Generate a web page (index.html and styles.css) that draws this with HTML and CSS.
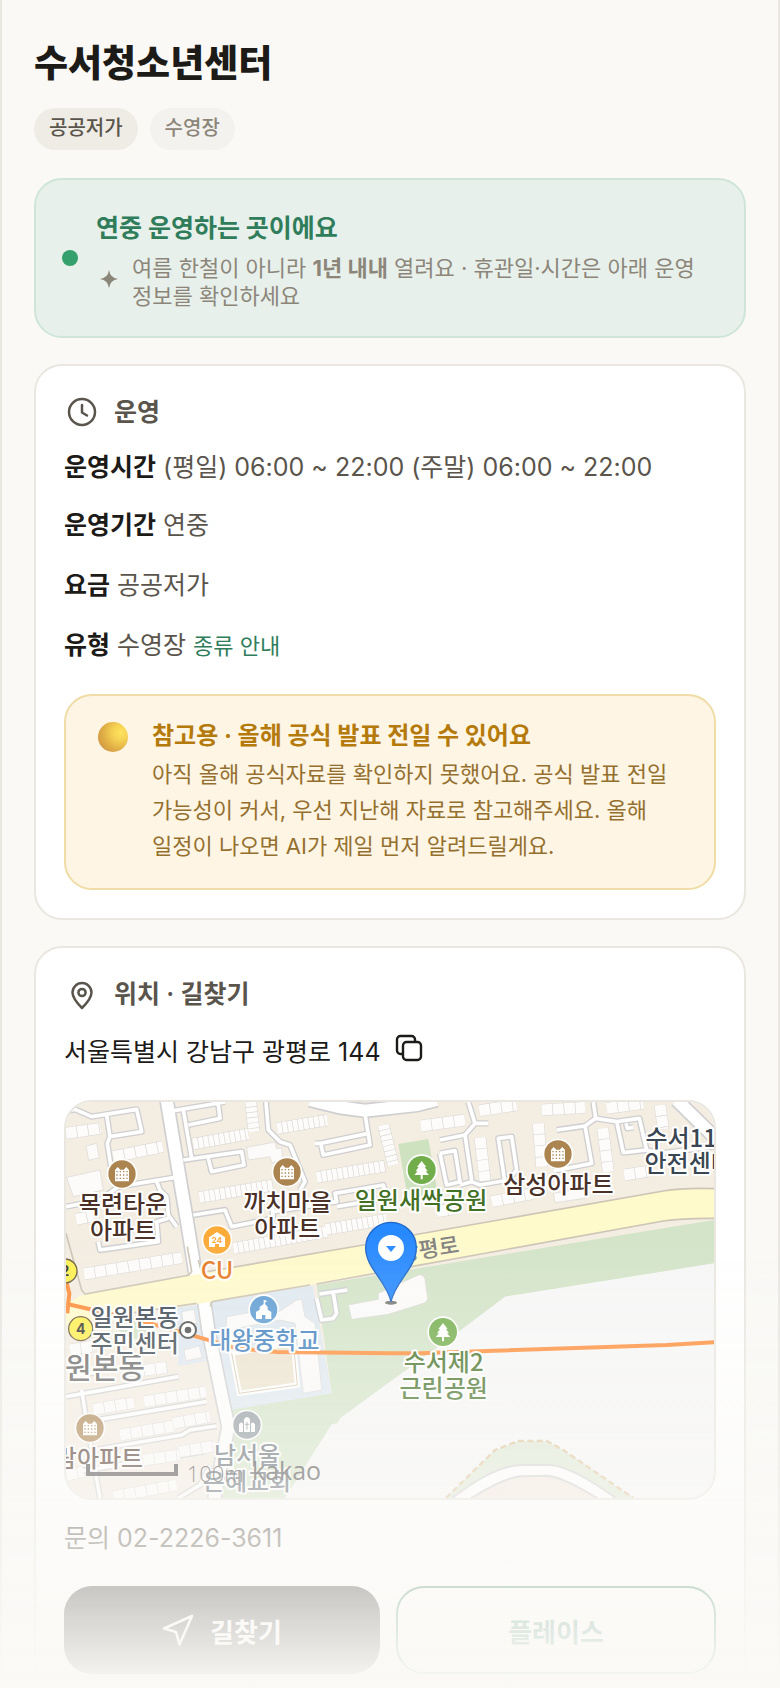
FILE: index.html
```html
<!DOCTYPE html>
<html lang="ko">
<head>
    <meta charset="UTF-8">
    <meta name="viewport" content="width=device-width, initial-scale=1.0">
    <title>수서청소년센터</title>
    <link rel="stylesheet" href="styles.css">
</head>
<body>
    <main class="app">
        <header class="place-header">
            <h1>수서청소년센터</h1>
            <div class="chips">
                <span class="chip chip-strong">공공저가</span>
                <span class="chip">수영장</span>
            </div>
        </header>

        <section class="status">
            <span class="status-dot"></span>
            <div class="status-body">
                <h2>연중 운영하는 곳이에요</h2>
                <div class="status-note">
                    <svg class="spark" viewBox="0 0 16 16"><path d="M8 0 Q9 7 16 8 Q9 9 8 16 Q7 9 0 8 Q7 7 8 0Z"/></svg>
                    <p>여름 한철이 아니라 <b>1년 내내</b> 열려요 · 휴관일·시간은 아래 운영 정보를 확인하세요</p>
                </div>
            </div>
        </section>

        <section class="card">
            <h2 class="card-title">
                <svg class="icon" viewBox="0 0 36 36"><circle cx="18" cy="18" r="13"/><path d="M18 11v7.500l5 3"/></svg>
                운영
            </h2>
            <ul class="info">
                <li><b>운영시간</b> (평일) 06:00 ~ 22:00 (주말) 06:00 ~ 22:00</li>
                <li><b>운영기간</b> 연중</li>
                <li><b>요금</b> 공공저가</li>
                <li><b>유형</b> 수영장 <a href="#guide">종류 안내</a></li>
            </ul>
            <div class="notice">
                <span class="orb"></span>
                <div>
                    <h3>참고용 · 올해 공식 발표 전일 수 있어요</h3>
                    <p>아직 올해 공식자료를 확인하지 못했어요. 공식 발표 전일 가능성이 커서, 우선 지난해 자료로 참고해주세요. 올해 일정이 나오면 AI가 제일 먼저 알려드릴게요.</p>
                </div>
            </div>
        </section>

        <section class="card">
            <h2 class="card-title">
                <svg class="icon" viewBox="0 0 36 36"><path d="M18 32C13 27 8.500 22 8.500 16.500a9.500 9.500 0 0 1 19 0C27.500 22 23 27 18 32Z"/><circle cx="18" cy="16.500" r="3.600"/></svg>
                위치 · 길찾기
            </h2>
            <div class="address">
                <span>서울특별시 강남구 광평로 144</span>
                <button class="copy" type="button" aria-label="주소 복사">
                    <svg viewBox="0 0 28 28"><path d="M7 20H5.500A3.500 3.500 0 0 1 2 16.500V5.500A3.500 3.500 0 0 1 5.500 2h11A3.500 3.500 0 0 1 20 5.500V7"/><rect x="8" y="8" width="18" height="18" rx="3.500"/></svg>
                </button>
            </div>

            <div class="map">
                <svg viewBox="48 36 1944 1188" preserveAspectRatio="xMidYMid slice">
                    <defs>
                        <g id="lanes">
                            <path d="M48 65L75 58L125 80L260 58L275 125L180 140L170 75M180 140L172 160L182 225L205 290L375 262M320 275L330 300L350 320L355 375L380 410M355 385L320 395L325 455L150 480L145 455M205 290L150 330L48 350"/>
                            <path d="M372 62L525 36M400 60L425 205M505 45L510 85L415 105M400 210L575 185L582 225L485 245L475 205M425 205L400 60"/>
                            <path d="M648 36L655 120L690 155L720 165L755 250L765 275L750 300M430 375L525 360L545 410L670 385L665 345M670 365L860 335L855 310L1000 285L1010 325L860 350"/>
                            <path d="M945 72L960 165L820 195L812 160L795 160M812 160L955 130"/>
                            <path d="M1255 36L1275 100L1315 100M1275 100L1245 135L1170 150M1245 135L1265 270M1170 190L1215 182L1230 275L1190 285L1170 190M1230 285L1265 275L1290 285L1375 270L1400 240L1385 140L1345 145L1365 280"/>
                            <path d="M1630 36L1637 85L1605 108L1520 120M1605 108L1625 220L1510 243M1637 85L1700 95L1768 85L1790 180L1720 188L1700 95M1728 100L1732 115L1750 112M1790 180L1830 190L1992 170"/>
                            <path d="M48 920L385 860M110 995L470 935M95 900L110 995L150 1224M130 1080L395 1035L420 1020L500 1008M48 1150L460 1085M385 1224L450 1185L480 1130M60 860L150 845"/>
                            <path d="M808 612L892 600M850 610L860 670L850 685L815 690L800 625"/>
                        </g>
                        <g id="mainst">
                            <path d="M350 30L395 300L412 400L440 575"/>
                            <path d="M462 630L475 720L520 940L535 1010L490 1240"/>
                            <path d="M780 30L870 52L945 62L1100 45L1160 30"/>
                            <path d="M1880 30L1992 140"/>
                        </g>
                        <g id="rows">
                            <path d="M430 162L595 132M448 322L670 285M682 115L832 90M800 262L1005 228M828 418L1010 388M1000 105L1030 225M602 36L612 125M550 475L830 425"/>
                        </g>
                        <g id="blocks">
                            <path d="M48 130L152 115M190 200L338 170M102 552L395 503M1288 62L1400 45M1475 60L1605 52M1670 55L1780 40M1112 108L1245 90M1465 100L1475 230M1290 143L1305 272M1658 115L1675 245M1830 45L1840 118M1722 255L1800 243M1325 335L1450 310M1160 365L1210 357M78 388L130 378"/>
                            <path d="M282 935L468 905M130 958L252 938M210 1035L370 1008M370 1000L480 980M280 1110L388 1095M388 1085L495 1068M190 1220L380 1185M50 1155L100 1145M60 780L130 768M250 845L352 832"/>
                        </g>
                        <g id="apt">
                            <circle class="ring" r="46"/>
                            <circle r="41" fill="#ab8450"/>
                            <path d="M-21 22V-12L-13 -21L-5 -13H5L13 -21L21 -12V22Z" fill="#fff"/>
                            <path d="M-17 -7H17M-17 3H17M-17 13H17" stroke="#ab8450" stroke-width="4" stroke-dasharray="4 6"/>
                        </g>
                        <g id="tree">
                            <circle class="ring" r="47"/>
                            <circle r="42" fill="#72ad4b"/>
                            <path d="M0 -27L14 -9H9L18 4H12L22 15H3V28H-3V15H-22L-12 4H-18L-9 -9H-14Z" fill="#fff"/>
                        </g>
                    </defs>

                    <rect x="48" y="36" width="1944" height="1188" fill="#f4ede2"/>
                    <path d="M800 585L1992 390V522L1365 620L705 1224H515L545 955L845 910Z" fill="#d3e4c8"/>
                    <path d="M1992 520L1365 620L1230 722L1020 875L870 985L862 1000L845 1003L705 1224H1992Z" fill="#f7f7f7"/>
                    <path d="M1045 162L1135 147L1165 320L1075 335Z" fill="#cfe2c0"/>
                    <path d="M482 637L788 587L845 910L540 960Z" fill="#dfe9f1"/>
                    <path d="M380 655L442 645L472 812L385 828Z" fill="#dfe9f1"/>
                    <path d="M205 705L290 690L300 740L215 752Z" fill="#d3e4c8"/>

                    <use href="#mainst" class="street-edge"/>
                    <use href="#lanes" class="lane-edge"/>
                    <use href="#mainst" class="street"/>
                    <use href="#lanes" class="lane"/>
                    <use href="#rows" class="row-edge"/>
                    <use href="#rows" class="row-fill"/>
                    <use href="#blocks" class="block-edge"/>
                    <use href="#blocks" class="block-fill"/>

                    <g class="building">
                        <path d="M50 262L150 240L160 300L70 320Z"/>
                        <path d="M108 168L140 160L148 203L116 211Z"/>
                        <path d="M590 172L675 156L680 176L695 173L700 212L665 218L660 200L595 210Z"/>
                        <path d="M530 680L640 660L650 690L740 630L755 628L765 680L795 700L815 900L760 910L735 700L690 690L560 715L550 780L525 785Z"/>
                        <path d="M395 665L432 658L440 700L400 705ZM402 780L448 768L456 803L408 812Z"/>
                        <path d="M895 645L985 628L985 610L1105 555Q1120 552 1125 568L1133 625Q1133 635 1120 640L1015 673L905 688Z"/>
                        <path d="M1510 310L1600 295L1605 325L1515 338Z"/>
                    </g>
                    <path d="M545 790L730 758L742 885L568 910Z" fill="#ede4cf" stroke="#fff" stroke-width="16"/>
                    <path d="M545 790L568 910L742 885L730 758" fill="none" stroke="#d8c8b0" stroke-width="3"/>

                    <!-- 광평로 -->
                    <path d="M48 640L105 612L425 556L560 530L940 465L1090 435L1840 303Q1900 293 1992 296V385Q1900 384 1840 393L1100 527L780 585L480 636L250 668L48 705Z" fill="#fffacb"/>
                    <path d="M48 430L95 600L105 612L415 556L425 545L412 470M445 510L455 548L940 465L1090 435L1840 303Q1900 293 1992 296" class="kerb"/>
                    <path d="M1992 385Q1900 384 1840 393L1100 527L800 582M780 585L490 634Q480 638 482 650M440 640L250 668" class="kerb"/>

                    <path d="M1188 1224L1335 1080L1405 1053H1490L1540 1080L1750 1224Z" fill="#dfe9d4"/>
                    <path d="M1188 1224L1335 1080L1405 1053H1490L1540 1080L1750 1224" fill="none" stroke="#dfc49b" stroke-width="7" stroke-dasharray="18 10"/>
                    <path d="M1200 1230Q1330 1125 1420 1125H1500Q1570 1130 1705 1230Z" fill="#fff" stroke="#d3d3d3" stroke-width="6"/>
                    <path d="M1255 1230Q1370 1157 1420 1159L1490 1157Q1540 1160 1650 1230Z" fill="#f3eadf" stroke="#d3d3d3" stroke-width="6"/>

                    <path d="M50 580L58 610L52 670M48 641L130 660L300 700L440 740L560 775L680 786L1020 790L1110 790L1850 765L1992 757" fill="none" stroke="#ff8b35" stroke-width="12"/>

                    <text class="road-name" transform="translate(1050 515) rotate(-9)">광평로</text>
                    <text class="district" x="45" y="868">원본동</text>

                    <circle cx="45" cy="543" r="36" class="exit"/>
                    <text x="45" y="558" class="exit-no">2</text>
                    <circle cx="92" cy="716" r="36" class="exit"/>
                    <text x="92" y="731" class="exit-no">4</text>
                    <circle cx="414" cy="720" r="24" fill="#fff" stroke="#4b4b4b" stroke-width="6"/>
                    <circle cx="414" cy="720" r="10" fill="#4b4b4b"/>

                    <use href="#apt" x="216" y="252"/>
                    <use href="#apt" x="711" y="246"/>
                    <use href="#apt" x="1524" y="192"/>
                    <use href="#apt" x="120" y="1014"/>
                    <use href="#tree" x="1115" y="240"/>
                    <use href="#tree" x="1179" y="726"/>
                    <g transform="translate(501 450)">
                        <circle class="ring" r="46"/>
                        <circle r="41" fill="#fbab38"/>
                        <path d="M-24 21V-8L0 -24L24 -8V21H6V12H-6V21Z" fill="#fff"/>
                        <text y="9" class="store-no">24</text>
                    </g>
                    <g transform="translate(641 659)">
                        <circle class="ring" r="46"/>
                        <circle r="41" fill="#5e9cd3"/>
                        <path d="M-23 28V7L-12 0V-8L0 -17V-29H4L10 -25L4 -21V-17L12 -8V0L23 7V28H5V16H-5V28Z" fill="#fff"/>
                    </g>
                    <g transform="translate(591 1005)">
                        <circle class="ring" r="46"/>
                        <circle r="41" fill="#8d979f"/>
                        <path d="M-9 21V-17Q0 -31 9 -17V21ZM-24 21V-2Q-18 -12 -12 -4V21ZM24 21V-2Q18 -12 12 -4V21Z" fill="#fff"/>
                        <path d="M0 -9V14M-6 -2H6" stroke="#8d979f" stroke-width="3"/>
                    </g>

                    <g class="label brown">
                        <text x="219" y="370">목련타운</text>
                        <text x="219" y="447">아파트</text>
                        <text x="712" y="364">까치마을</text>
                        <text x="712" y="441">아파트</text>
                        <text x="1525" y="310">삼성아파트</text>
                        <text x="147" y="1130">람아파트</text>
                    </g>
                    <g class="label green">
                        <text x="1113" y="357">일원새싹공원</text>
                        <text x="1181" y="843">수서제2</text>
                        <text x="1181" y="921">근린공원</text>
                    </g>
                    <g class="label slate">
                        <text x="254" y="708">일원본동</text>
                        <text x="254" y="786">주민센터</text>
                        <text x="1914" y="170">수서119</text>
                        <text x="1916" y="247">안전센터</text>
                    </g>
                    <g class="label gray">
                        <text x="591" y="1121">남서울</text>
                        <text x="591" y="1200">은혜교회</text>
                    </g>
                    <text class="label orange" x="501" y="568">CU</text>
                    <text class="label blue" x="643" y="776">대왕중학교</text>

                    <g class="scale">
                        <path d="M114 1122V1152H378V1122" fill="none" stroke="#444" stroke-width="12"/>
                        <text x="410" y="1176">100m</text>
                        <text x="606" y="1170" class="kakao">kakao</text>
                    </g>

                    <ellipse cx="1023" cy="638" rx="18" ry="6" fill="#777"/>
                    <path d="M1023 635C1008 570 947 535 947 473a76 76 0 0 1 152 0C1099 535 1038 570 1023 635Z" fill="#2789ff" stroke="#1d66c9" stroke-width="4"/>
                    <circle cx="1023" cy="474" r="39" fill="#fff"/>
                    <path d="M1008 468H1038L1023 486Z" fill="#2789ff"/>
                </svg>
            </div>

            <p class="contact">문의 02-2226-3611</p>
            <div class="actions">
                <button class="btn btn-dark" type="button">
                    <svg class="send" viewBox="0 0 32 32"><path d="M30 2L2 14.500L14 18L17.500 30.500Z"/></svg>
                    길찾기
                </button>
                <button class="btn btn-line" type="button">플레이스</button>
            </div>
        </section>
        <div class="fade"></div>
    </main>
</body>
</html>
```
FILE: styles.css
```css
* {
    box-sizing: border-box;
}

body {
    margin: 0;
    background-color: #faf9f6;
    color: #5a554c;
    font-family: Inter, "Noto Sans CJK KR", sans-serif;
    font-size: 25px;
    word-break: keep-all;
}

h1, h2, h3, p, ul {
    margin: 0;
    padding: 0;
}

.app {
    height: 100vh;
    overflow-y: auto;
    scrollbar-width: none;
    padding: 36px 32px;
    border: solid #e9e7e0;
    border-width: 0 2px;
}

h1 {
    color: #1c1b18;
    font-size: 37px;
    font-weight: 800;
    line-height: 56px;
}

.chips {
    display: flex;
    gap: 12px;
    margin: 16px 0 28px;
}

.chip {
    padding: 0 15px;
    border-radius: 21px;
    background-color: #f3f2ee;
    color: #8c867a;
    font-size: 20px;
    font-weight: 500;
    line-height: 40px;
    height: 42px;
}

.chip-strong {
    background-color: #efece5;
    color: #5a554c;
}

.status {
    display: flex;
    align-items: center;
    gap: 18px;
    padding: 26px 24px;
    border: 2px solid #cfe5d9;
    border-radius: 28px;
    background-color: #e8f0eb;
}

.status-dot {
    flex: none;
    width: 16px;
    height: 16px;
    margin-left: 2px;
    border-radius: 50%;
    background-color: #35a06b;
}

.status h2 {
    color: #2f7d5b;
    font-size: 25px;
    font-weight: 700;
    line-height: 44px;
}

.status-note {
    display: flex;
    align-items: flex-start;
    gap: 14px;
    padding-left: 4px;
    margin-top: 4px;
    color: #8c867a;
    font-size: 22px;
    line-height: 28px;
}

.spark {
    flex: none;
    width: 18px;
    height: 18px;
    margin-top: 16px;
    fill: #8c867a;
}

.card {
    margin-top: 26px;
    padding: 28px;
    border: 2px solid #e9e7e0;
    border-radius: 28px;
    background-color: #fff;
}

.card-title {
    display: flex;
    align-items: center;
    gap: 14px;
    font-size: 25px;
    font-weight: 600;
    line-height: 36px;
}

.icon {
    width: 36px;
    height: 36px;
    fill: none;
    stroke: #5a554c;
    stroke-width: 2.5;
    stroke-linecap: round;
    stroke-linejoin: round;
}

.info {
    list-style: none;
    padding-top: 9px;
}

.info li {
    line-height: 60px;
}

.info li:first-child {
    line-height: 56px;
}

.info b {
    color: #1c1b18;
    font-weight: 700;
}

.info a {
    color: #2f7d5b;
    font-size: 22px;
    text-decoration: none;
}

.notice {
    display: flex;
    gap: 24px;
    margin-top: 18px;
    padding: 22px 28px 24px 32px;
    border: 2px solid #f0dca6;
    border-radius: 28px;
    background-color: #fff5e4;
}

.orb {
    flex: none;
    width: 30px;
    height: 30px;
    margin-top: 4px;
    border-radius: 50%;
    background: radial-gradient(circle at 75% 35%, #ffe35e 0, #f6d254 25%, #dfac45 60%, #d39a45 80%, #d9805c 100%);
}

.notice h3 {
    color: #b47a0b;
    font-size: 24px;
    font-weight: 700;
    line-height: 36px;
}

.notice p {
    margin-top: 2px;
    color: #94702f;
    font-size: 22px;
    line-height: 36px;
}

.address {
    display: flex;
    align-items: flex-start;
    gap: 14px;
    margin: 20px 0 28px;
    color: #1c1b18;
    line-height: 40px;
}

.copy {
    padding: 2px 0 0;
    border: none;
    background: none;
    cursor: pointer;
    line-height: 0;
}

.copy svg {
    width: 28px;
    height: 28px;
    fill: none;
    stroke: #1c1b18;
    stroke-width: 2.4;
}

.map {
    overflow: hidden;
    height: 400px;
    border: 2px solid #e9e7e0;
    border-radius: 28px;
}

.map svg {
    display: block;
    width: 100%;
    height: 100%;
}

.contact {
    margin-top: 18px;
    line-height: 40px;
}

.actions {
    display: flex;
    gap: 16px;
    margin-top: 28px;
}

.btn {
    display: flex;
    flex: 1;
    align-items: center;
    justify-content: center;
    gap: 16px;
    height: 88px;
    border: none;
    border-radius: 28px;
    font: inherit;
    font-size: 26px;
    font-weight: 700;
    cursor: pointer;
}

.btn-dark {
    background-color: #1c1b18;
    color: #fff;
}

.btn-line {
    border: 2px solid #2f7d5b;
    background-color: #fff;
    color: #2f7d5b;
}

.send {
    width: 32px;
    height: 32px;
    fill: none;
    stroke: #fff;
    stroke-width: 2.5;
    stroke-linejoin: round;
}

.fade {
    position: fixed;
    right: 0;
    bottom: 0;
    left: 0;
    height: 458px;
    background: linear-gradient(rgba(250, 249, 246, 0), #faf9f6);
    pointer-events: none;
}

/* map */
.lane, .lane-edge, .street, .street-edge, .row-fill, .row-edge, .block-fill, .block-edge, .kerb {
    fill: none;
}

.lane-edge {
    stroke: #cfcfd1;
    stroke-width: 19;
    stroke-linejoin: round;
}

.lane {
    stroke: #fff;
    stroke-width: 11;
    stroke-linejoin: round;
}

.street-edge {
    stroke: #cfcfd1;
    stroke-width: 46;
}

.street {
    stroke: #fff;
    stroke-width: 36;
}

.row-edge, .block-edge {
    stroke: #d9d7d3;
    stroke-width: 36;
}

.row-fill {
    stroke: #fdfcfb;
    stroke-width: 33;
    stroke-dasharray: 14 2;
}

.block-fill {
    stroke: #fdfcfb;
    stroke-width: 33;
    stroke-dasharray: 32 2;
}

.building path {
    fill: #fcfbfa;
    stroke: #d9d7d3;
    stroke-width: 2;
}

.kerb {
    stroke: #cdc5b5;
    stroke-width: 5;
}

.ring {
    fill: #fff;
}

.label, .district, .road-name {
    font-family: "Noto Sans CJK KR", sans-serif;
    font-size: 72px;
    font-weight: 500;
    stroke: #fff;
    stroke-width: 12px;
    stroke-linejoin: round;
    paint-order: stroke;
    text-anchor: middle;
}

.brown { fill: #4a3128; }
.green { fill: #427024; }
.slate { fill: #3a4651; }
.gray { fill: #5d6972; }
.orange { fill: #e67a22; }
.blue { fill: #3f7fc0; }

.district {
    fill: #666;
    font-size: 87px;
    text-anchor: start;
}

.road-name {
    fill: #808080;
    font-size: 66px;
    stroke: none;
    text-anchor: start;
}

.exit {
    fill: #fff04f;
    stroke: #6a5d3c;
    stroke-width: 4;
}

.exit-no, .store-no {
    fill: #333;
    font-size: 42px;
    font-weight: 700;
    text-anchor: middle;
}

.store-no {
    fill: #fbab38;
    font-size: 24px;
}

.scale text {
    fill: #444;
    font-family: "Open Sans", sans-serif;
    font-size: 66px;
    font-weight: 300;
}

.scale .kakao {
    font-size: 75px;
    font-weight: 400;
}
```
